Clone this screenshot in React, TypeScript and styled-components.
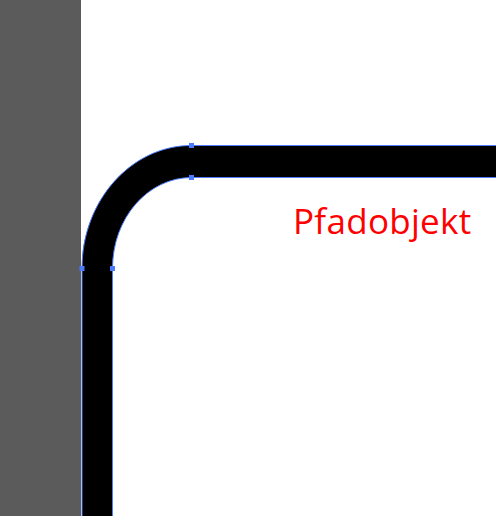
import React from "react";
import styled, { createGlobalStyle } from "styled-components";

const Global = createGlobalStyle`
  html, body { margin: 0; padding: 0; background: #ffffff; }
  body { width: 496px; height: 516px; overflow: hidden; }
`;

const Page = styled.div`
  display: flex;
  width: 496px;
  height: 516px;
`;

const SidePanel = styled.div`
  width: 81px;
  flex: 0 0 81px;
  background: #5b5b5b;
`;

const Canvas = styled.div`
  position: relative;
  flex: 1;
  background: #ffffff;
`;

const Drawing = styled.svg`
  position: absolute;
  left: -81px;
  top: 0;
  overflow: visible;
`;

const Label = styled.span`
  position: absolute;
  left: 212px;
  top: 197px;
  font-family: "Open Sans", "Noto Sans", sans-serif;
  font-size: 35px;
  line-height: 48px;
  letter-spacing: 0.3px;
  color: #ff0000;
`;

const anchors: [number, number][] = [
  [191.5, 145.5],
  [191.5, 177.5],
  [82, 268.5],
  [112.5, 268.5],
];

export default function App() {
  const d =
    "M82 530 L82 268.5 C82 201 131 145.5 191.5 145.5 L510 145.5 L510 177.5 L191.5 177.5 C148 177.5 112.5 218 112.5 268.5 L112.5 530 Z";
  return (
    <>
      <Global />
      <Page>
        <SidePanel />
        <Canvas>
          <Drawing width={496} height={516} viewBox="0 0 496 516">
            <path d={d} fill="#000000" stroke="#4d7bff" strokeWidth={1} />
            {anchors.map(([x, y], i) => (
              <rect key={i} x={x - 2.5} y={y - 2.5} width={5} height={5} fill="#4d7bff" />
            ))}
          </Drawing>
          <Label>Pfadobjekt</Label>
        </Canvas>
      </Page>
    </>
  );
}
